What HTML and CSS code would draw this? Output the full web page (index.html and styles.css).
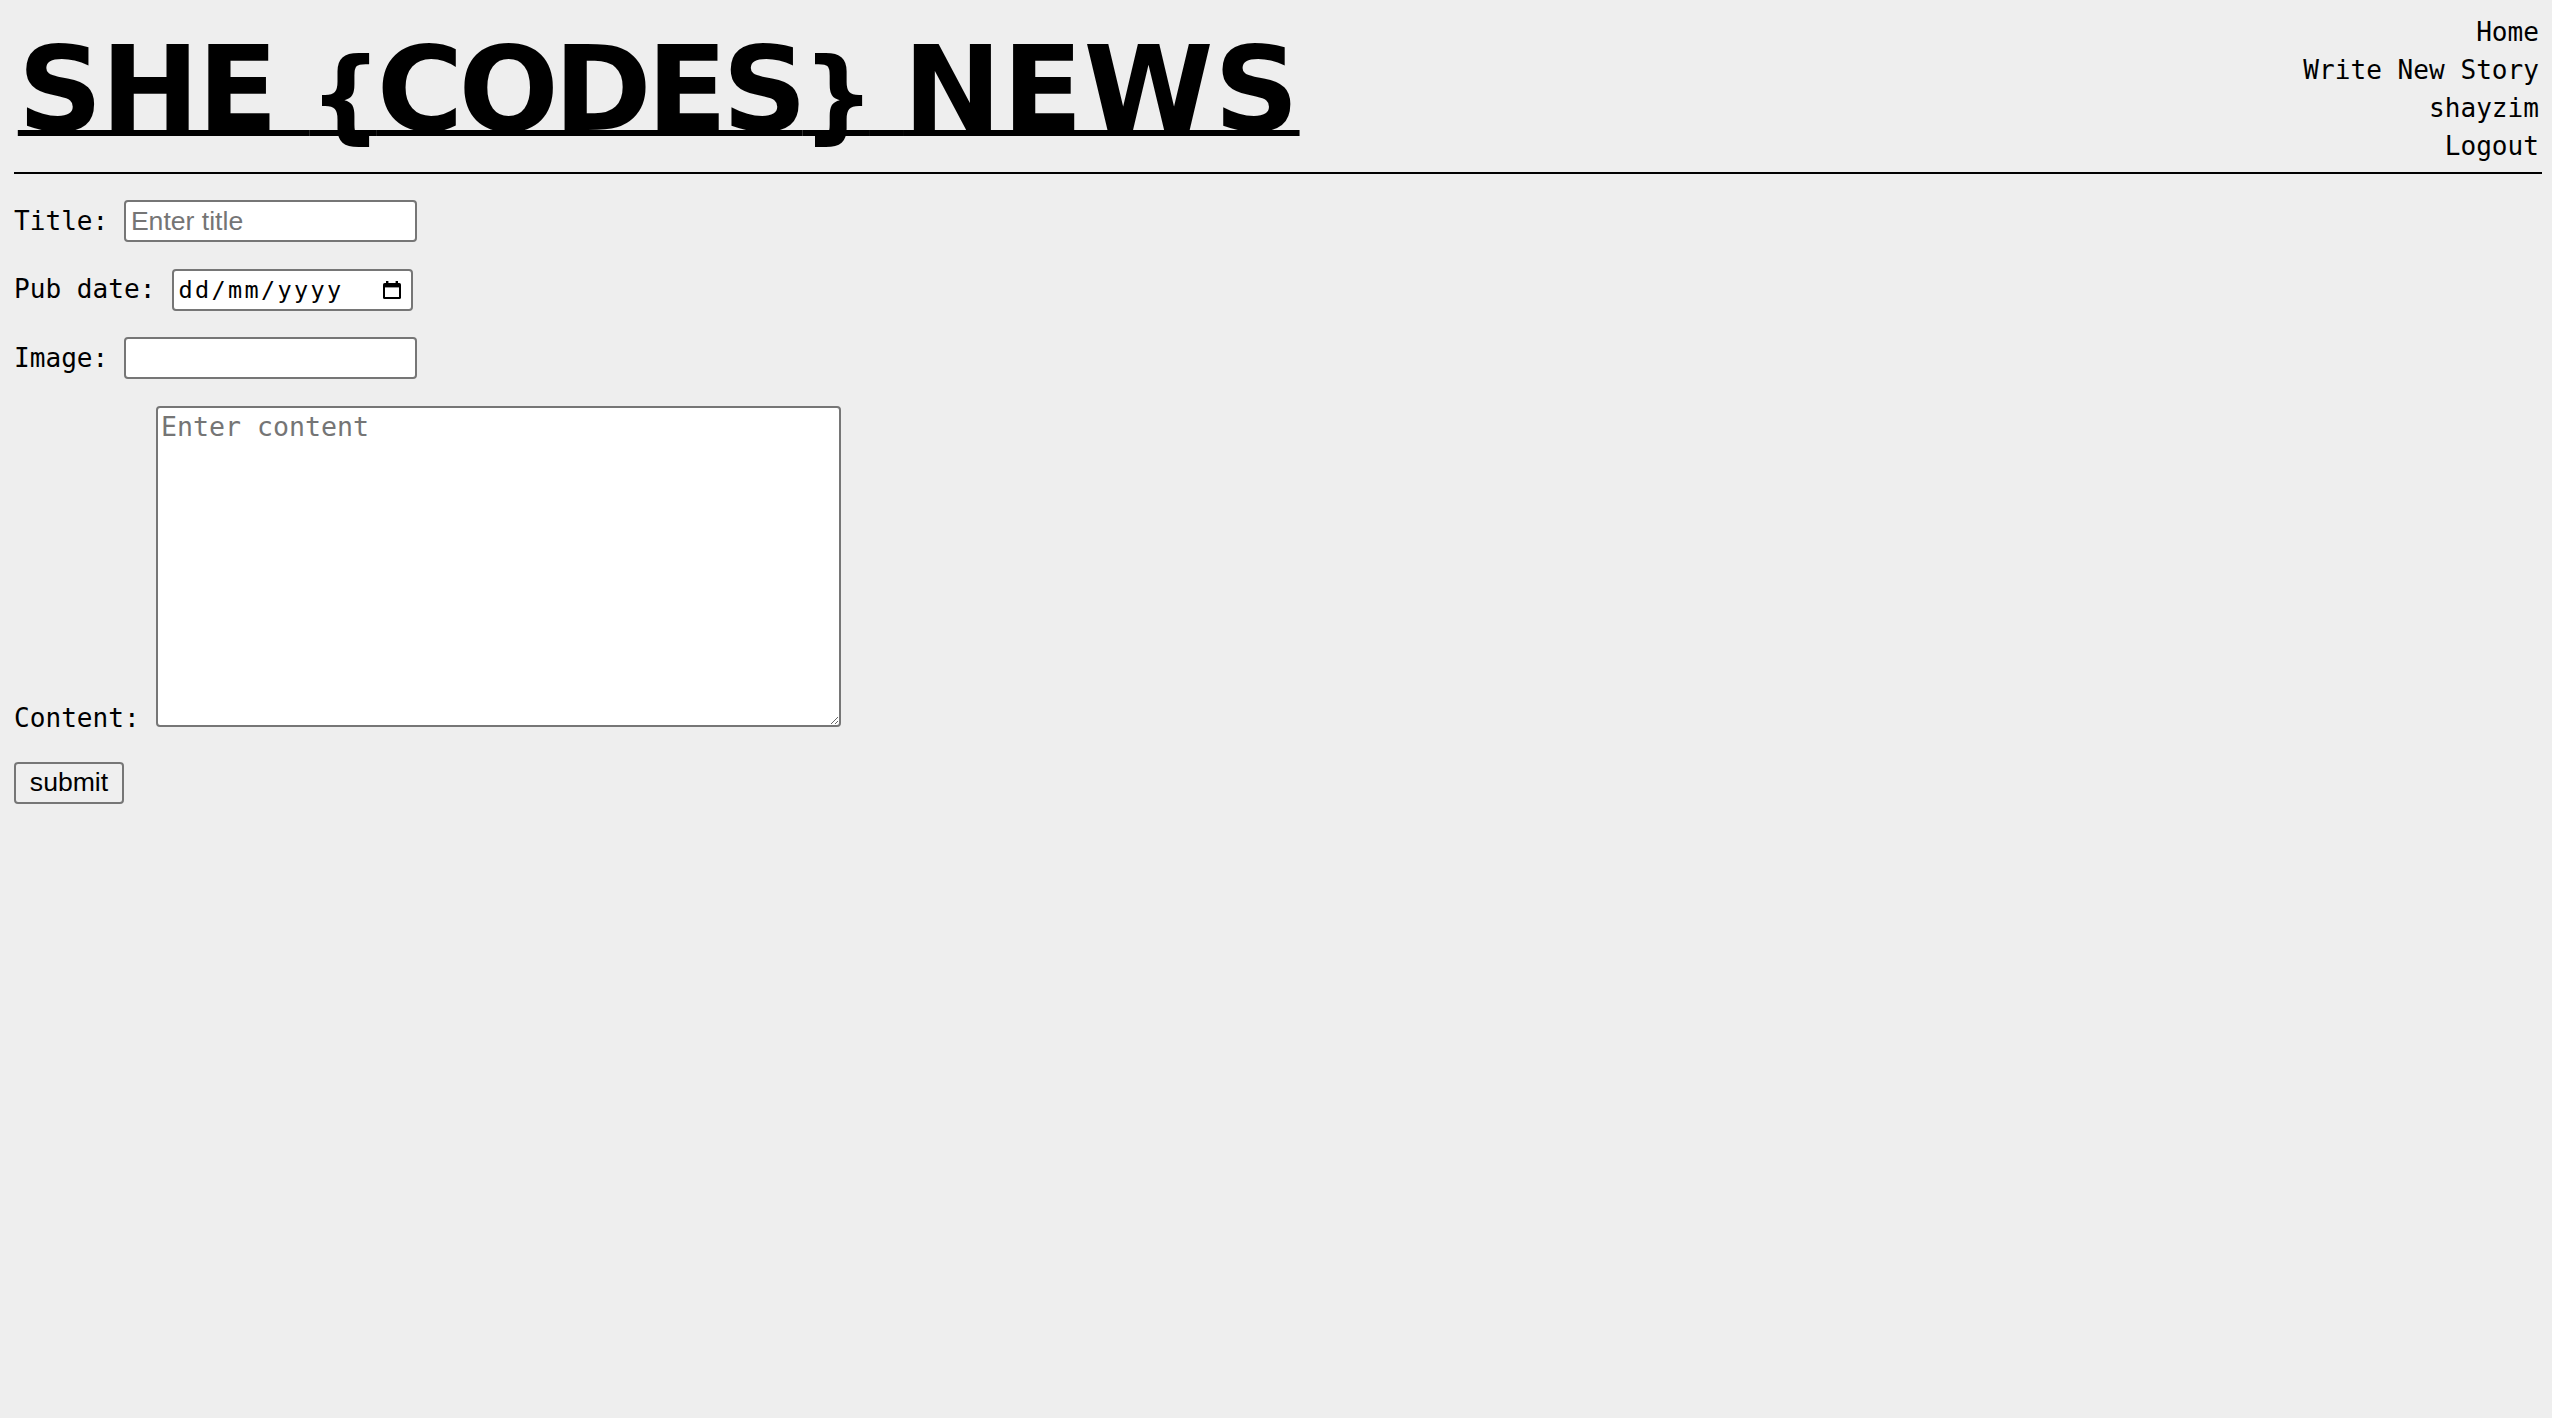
FILE: index.html
```html
<!DOCTYPE html>
<html lang="en">
<head>
<meta charset="utf-8">
<title>She Codes News</title>
<link rel="stylesheet" href="styles.css">
</head>
<body>
<header class="site-header">
  <h1 class="brand"><a href="#" class="brand-link">SHE <span class="codes"><span class="brace">{</span>CODES<span class="brace">}</span></span> <span class="news">NEWS</span></a></h1>
  <nav class="main-nav">
    <a href="#" class="nav-link">Home</a>
    <a href="#" class="nav-link">Write New Story</a>
    <a href="#" class="nav-link">shayzim</a>
    <a href="#" class="nav-link">Logout</a>
  </nav>
</header>
<form class="story-form">
  <p class="field"><label class="field-label" for="title">Title:</label> <input id="title" class="text-input" type="text" placeholder="Enter title"></p>
  <p class="field"><label class="field-label" for="pub">Pub date:</label> <span class="date-input" id="pub"><span class="date-text">dd/mm/yyyy</span><svg class="cal-icon" width="20" height="18" viewBox="0 0 20 18"><rect x="4" y="0" width="2.4" height="3" fill="#000"/><rect x="13.6" y="0" width="2.4" height="3" fill="#000"/><rect x="1" y="2" width="18" height="16" rx="1.6" fill="#000"/><rect x="3" y="6.4" width="14" height="9.6" fill="#fff"/></svg></span></p>
  <p class="field"><label class="field-label" for="image">Image:</label> <input id="image" class="text-input" type="url"></p>
  <p class="field"><label class="field-label" for="content">Content:</label> <textarea id="content" class="content-input" placeholder="Enter content"></textarea></p>
  <p class="field field-submit"><button type="button" class="submit-btn">submit</button></p>
</form>
</body>
</html>
```
FILE: styles.css
```css
html {
  background: #eeeeee;
}

body {
  margin: 12.8px 10px 12.8px 14px;
  background: #eeeeee;
  color: #000;
  font-family: "DejaVu Sans Mono", monospace;
  font-size: 26.1px;
}

.site-header {
  display: flex;
  justify-content: space-between;
  align-items: flex-start;
  border-bottom: 2px solid #000;
  margin-left: -1px;
}

.brand {
  margin: 8.4px 0 13.4px 4.8px;
  font-family: "DejaVu Sans", sans-serif;
  font-weight: 700;
  font-size: 118px;
  line-height: 137px;
  height: 137px;
  letter-spacing: -2px;
  word-spacing: -6px;
}

.brand-link {
  color: #000;
  text-decoration: underline;
  text-decoration-thickness: 6px;
  text-underline-offset: 0px;
  text-decoration-skip-ink: none;
}

.codes {
  letter-spacing: -5px;
}

.brace {
  font-size: 102px;
  line-height: 0;
}

.news {
  letter-spacing: 0.5px;
}

.main-nav {
  display: flex;
  flex-direction: column;
  align-items: flex-end;
  margin-top: 1.5px;
  padding-right: 3px;
  line-height: 37.9px;
}

.nav-link {
  color: #000;
  text-decoration: none;
}

.story-form {
  margin: 0;
}

.field {
  margin: 26.9px 0;
}

.field-submit {
  margin-top: 29.5px;
}

.field-label {
  margin-right: 0.4px;
}

.text-input {
  box-sizing: border-box;
  width: 293px;
  height: 41.6px;
  margin: 0;
  padding: 0 4.5px;
  border: 2px solid #767676;
  border-radius: 4px;
  background: #fff;
  color: #000;
  font-family: "Liberation Sans", Arial, sans-serif;
  font-size: 26.6px;
  vertical-align: baseline;
}

.text-input::placeholder {
  color: #757575;
}

.date-input {
  box-sizing: border-box;
  display: inline-flex;
  align-items: center;
  justify-content: space-between;
  width: 241.6px;
  height: 41.6px;
  padding: 0 9px 0 5px;
  border: 2px solid #767676;
  border-radius: 4px;
  background: #fff;
  vertical-align: baseline;
}

.date-text {
  font-family: "DejaVu Sans Mono", monospace;
  font-size: 23.5px;
  letter-spacing: 2.35px;
  color: #000;
}

.cal-icon {
  display: block;
  flex: none;
}

.content-input {
  box-sizing: border-box;
  width: 685.3px;
  height: 320.6px;
  margin: 0;
  padding: 3px 3.2px;
  border: 2px solid #767676;
  border-radius: 4px;
  background: #fff;
  color: #000;
  font-family: "DejaVu Sans Mono", monospace;
  font-size: 26.6px;
  vertical-align: baseline;
}

.content-input::placeholder {
  color: #757575;
}

.submit-btn {
  box-sizing: border-box;
  width: 110px;
  height: 41.6px;
  margin: 0;
  padding: 0;
  border: 2px solid #767676;
  border-radius: 4px;
  background: #efefef;
  color: #000;
  font-family: "Liberation Sans", Arial, sans-serif;
  font-size: 26.6px;
}
```
